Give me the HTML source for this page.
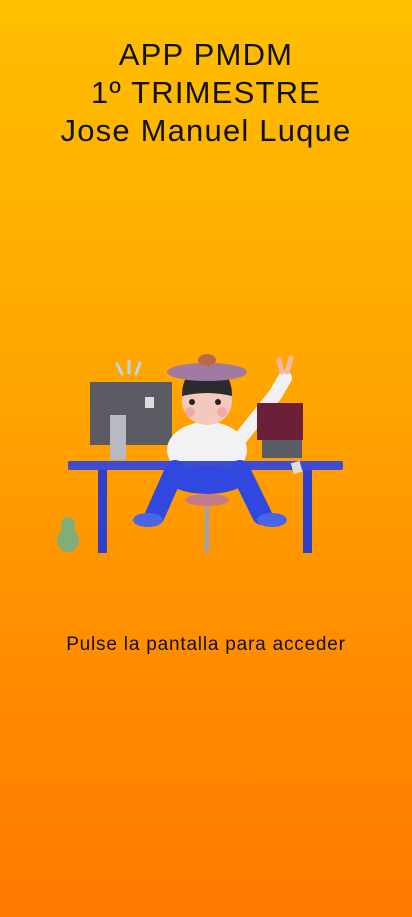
<!DOCTYPE html>
<html><head><meta charset="utf-8"><style>
html,body{margin:0;padding:0}
body{width:412px;height:917px;overflow:hidden;background:linear-gradient(180deg,#FFBF00 0%,#FFA300 45%,#FF8A00 75%,#FF7A00 100%);font-family:"Liberation Sans",sans-serif;color:#111;position:relative}
.t{position:absolute;left:0;width:412px;text-align:center;font-size:31px;letter-spacing:1.2px;line-height:38px;top:36px}
.b{position:absolute;left:0;width:412px;text-align:center;font-size:19px;letter-spacing:0.8px;top:634px}
svg{position:absolute;left:0;top:0}
</style></head><body>
<div class="t">APP PMDM<br>1º TRIMESTRE<br>Jose Manuel Luque</div>
<svg width="412" height="917" viewBox="0 0 412 917">
<ellipse cx="68" cy="540" rx="11" ry="12" fill="#7fae7a"/><ellipse cx="68" cy="525" rx="7" ry="8" fill="#7fae7a"/>
<g stroke="#b9d7e8" stroke-width="3" stroke-linecap="round"><line x1="117" y1="364" x2="122" y2="374"/><line x1="129" y1="361" x2="129" y2="373"/><line x1="140" y1="363" x2="136" y2="374"/></g>
<rect x="90" y="382" width="82" height="63" fill="#5b5c63"/>
<rect x="110" y="415" width="16" height="45" fill="#b8bac2"/>
<rect x="145" y="397" width="9" height="11" fill="#ddd"/>
<path d="M235 445 L275 395 L285 378" stroke="#f1f1f4" stroke-width="14" stroke-linecap="round" fill="none"/>
<path d="M282 372 l-3 -12 M287 372 l4 -14" stroke="#f2b8a8" stroke-width="5" stroke-linecap="round"/>
<rect x="257" y="403" width="46" height="37" fill="#6b1f38"/>
<rect x="262" y="440" width="40" height="18" fill="#5a5c66"/>
<ellipse cx="207" cy="450" rx="40" ry="28" fill="#f2f2f5"/>
<rect x="196" y="420" width="22" height="12" fill="#f2f2f5"/>
<ellipse cx="207" cy="401" rx="25" ry="24" fill="#f4c9bd"/>
<path d="M182 396 q0 -28 25 -28 q25 0 25 28 q-25 -6 -50 0z" fill="#2b2a2e"/>
<ellipse cx="207" cy="372" rx="40" ry="9" fill="#a07aa0"/>
<ellipse cx="207" cy="360" rx="9" ry="6" fill="#b86a48"/>
<circle cx="192" cy="402" r="3" fill="#222"/><circle cx="218" cy="402" r="3" fill="#222"/>
<circle cx="190" cy="412" r="5" fill="#f09aa0" opacity=".7"/><circle cx="222" cy="412" r="5" fill="#f09aa0" opacity=".7"/>
<rect x="68" y="461" width="275" height="9" rx="2" fill="#3f4bd0"/>
<rect x="98" y="470" width="9" height="83" fill="#3040c8"/>
<rect x="303" y="470" width="9" height="83" fill="#3040c8"/>
<rect x="205" y="500" width="4" height="53" fill="#9aa0c0"/>
<ellipse cx="207" cy="500" rx="22" ry="6" fill="#c37a8a"/>
<path d="M175 470 L155 515 M240 470 L262 515" stroke="#3148e0" stroke-width="20" stroke-linecap="round"/>
<ellipse cx="207" cy="480" rx="38" ry="14" fill="#3148e0"/>
<ellipse cx="148" cy="520" rx="15" ry="7" fill="#4a64e8"/>
<ellipse cx="272" cy="520" rx="15" ry="7" fill="#4a64e8"/>
<rect x="292" y="462" width="9" height="11" fill="#ddd" transform="rotate(-15 296 467)"/>
</svg>
<div class="b">Pulse la pantalla para acceder</div>
</body></html>
